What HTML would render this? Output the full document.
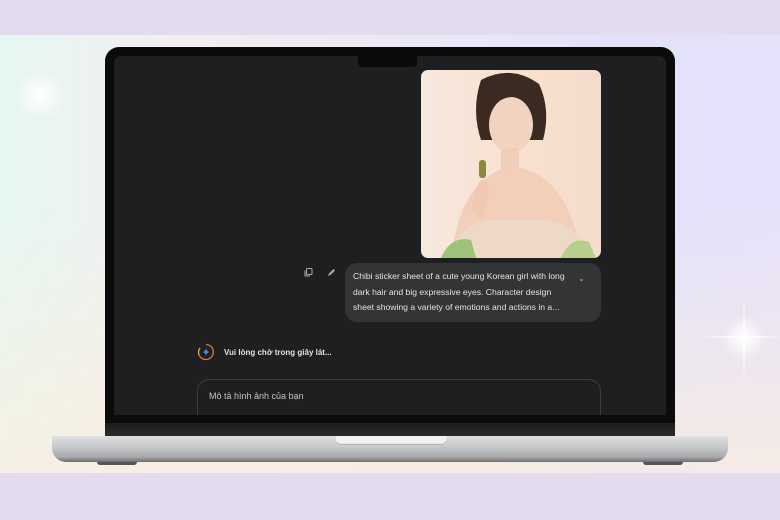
<!DOCTYPE html>
<html><head><style>
*{margin:0;padding:0;box-sizing:border-box}
body{width:780px;height:520px;overflow:hidden;position:relative;background:#e4dcee;font-family:"Liberation Sans","Noto Sans CJK SC",sans-serif}
.mid{position:absolute;left:0;top:35px;width:780px;height:438px;background:linear-gradient(90deg,#e6f7f2 0%,#f4eef0 25%,#ece8f6 50%,#e2e2fb 80%,#e6e2fb 100%)}
.mid:after{content:"";position:absolute;left:0;top:0;width:780px;height:438px;background:linear-gradient(180deg,rgba(255,255,255,0) 40%,rgba(252,238,220,.7) 100%)}
.bot{position:absolute;left:0;top:473px;width:780px;height:47px;background:#e4dcee}
.bezel{position:absolute;left:105px;top:47px;width:570px;height:383px;background:#0b0b0b;border-radius:14px 14px 0 0}
.screen{position:absolute;left:114px;top:56px;width:552px;height:359px;background:#1e1f20;border-radius:7px 7px 0 0;overflow:hidden}
.notch{position:absolute;left:244px;top:0;width:59px;height:11px;background:#0b0b0b;border-radius:0 0 4px 4px}
.base{position:absolute;left:52px;top:436px;width:676px;height:26px;background:linear-gradient(180deg,#e0e0e2 0%,#c9cacc 40%,#a9aaad 80%,#6d6e70 100%);border-radius:2px 2px 14px 14px}
.hinge{position:absolute;left:105px;top:423px;width:570px;height:14px;background:linear-gradient(#1c1c1c,#2c2c2c)}
.lip{position:absolute;left:335px;top:436px;width:112px;height:9px;background:#f2f2f3;border-radius:0 0 6px 6px;box-shadow:inset 0 -1px 1px #aaa}
.foot{position:absolute;top:462px;width:40px;height:3px;background:#555;border-radius:0 0 3px 3px}
.photo{position:absolute;left:307px;top:14px;width:180px;height:188px;border-radius:7px;overflow:hidden;background:linear-gradient(90deg,#f7e8de,#f9e0cf 60%,#f3dccb)}
.bubble{position:absolute;left:231px;top:207px;width:256px;height:59px;background:#333436;border-radius:12px;color:#e3e3e3;font-size:8.6px;line-height:15.5px;padding:6px 30px 0 8px}
.load{position:absolute;left:110px;top:292px;color:#e3e3e3;font-size:8px;font-weight:bold}
.input{position:absolute;left:83px;top:323px;width:404px;height:50px;border:1px solid #3c3d3f;border-radius:12px;color:#c4c7c5;font-size:9px;padding:11px 11px}
.glow{position:absolute;border-radius:50%;background:radial-gradient(circle,#fff 0%,rgba(255,255,255,.6) 30%,rgba(255,255,255,0) 70%)}
</style></head><body>
<div class="mid"></div><div class="bot"></div>
<div class="glow" style="left:15px;top:70px;width:50px;height:50px"></div>
<div class="glow" style="left:722px;top:316px;width:44px;height:44px"></div>
<div style="position:absolute;left:743px;top:295px;width:2px;height:90px;background:linear-gradient(rgba(255,255,255,0),#fff,rgba(255,255,255,0))"></div>
<div style="position:absolute;left:700px;top:336px;width:86px;height:2px;background:linear-gradient(90deg,rgba(255,255,255,0),#fff,rgba(255,255,255,0))"></div>
<div class="bezel"></div>
<div class="screen">
 <div class="notch"></div>
 <div class="photo">
  <svg width="180" height="188" viewBox="0 0 180 188">
   <path d="M60 10 Q90 -6 118 14 Q130 40 122 70 L60 70 Q50 40 60 10Z" fill="#3a2a22"/>
   <ellipse cx="90" cy="55" rx="22" ry="28" fill="#f2d3c2"/>
   <path d="M68 40 Q90 15 114 38 L114 30 Q90 8 66 32Z" fill="#3a2a22"/>
   <rect x="80" y="78" width="18" height="22" fill="#efcdb9"/>
   <path d="M30 188 Q40 110 85 98 L100 98 Q150 110 160 188Z" fill="#f3cfba"/>
   <path d="M25 188 Q40 150 70 150 L120 150 Q155 150 170 188Z" fill="#eed8c8"/>
   <path d="M20 188 Q30 165 50 170 L55 188Z" fill="#9fc27a"/>
   <path d="M140 188 Q150 165 168 172 L175 188Z" fill="#b6cf8a"/>
   <rect x="58" y="90" width="7" height="18" rx="3" fill="#8a8a3a"/>
   <path d="M50 140 Q55 105 66 110 Q70 130 60 150Z" fill="#f0c9b2"/>
  </svg>
 </div>
 <svg style="position:absolute;left:190px;top:212px" width="9" height="9" viewBox="0 0 9 9"><rect x="2.5" y="0.5" width="5.5" height="6" rx="1" fill="none" stroke="#aaa"/><path d="M1 2.5V8h5" fill="none" stroke="#aaa"/></svg>
 <svg style="position:absolute;left:213px;top:212px" width="9" height="9" viewBox="0 0 9 9"><path d="M1 8 L2 5.5 L6.5 1 L8 2.5 L3.5 7Z" fill="#aaa"/></svg>
 <div class="bubble">Chibi sticker sheet of a cute young Korean girl with long dark hair and big expressive eyes. Character design sheet showing a variety of emotions and actions in a...</div>
 <div style="position:absolute;left:464px;top:218px;color:#bbb;font-size:8px">⌄</div>
 <svg style="position:absolute;left:83px;top:287px" width="18" height="18" viewBox="0 0 18 18"><path d="M9 1.5 A7.5 7.5 0 1 1 2 12" fill="none" stroke="#e8703a" stroke-width="1.3"/><path d="M2 12 A7.5 7.5 0 0 1 3 5" fill="none" stroke="#f2b13a" stroke-width="1.3"/><path d="M9 5 Q9.5 8.5 12.5 9 Q9.5 9.5 9 13 Q8.5 9.5 5.5 9 Q8.5 8.5 9 5Z" fill="#4a8bf5"/></svg>
 <div class="load">Vui lòng chờ trong giây lát...</div>
 <div class="input">Mô tả hình ảnh của bạn</div>
</div>
<div class="hinge"></div>
<div class="base"></div>
<div class="lip"></div>
<div class="foot" style="left:97px"></div>
<div class="foot" style="left:643px"></div>
</body></html>
